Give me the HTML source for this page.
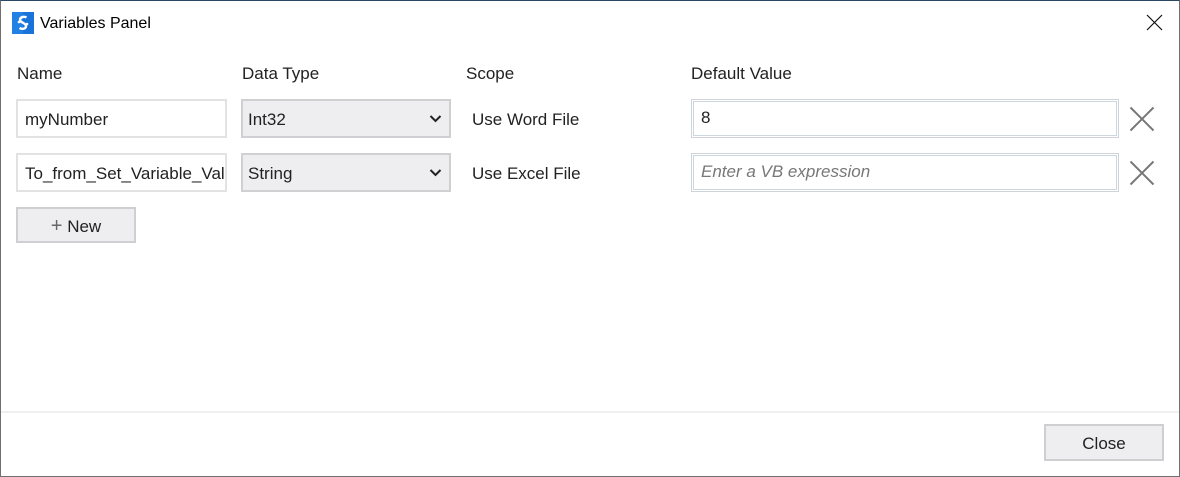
<!DOCTYPE html>
<html><head><style>
body{margin:0;width:1180px;height:477px;overflow:hidden;background:#fff;font-family:"Segoe UI","Liberation Sans",sans-serif;font-size:17px;color:#222;position:relative}
.a{position:absolute}
.win{left:0;top:0;width:1178px;height:475px;border:1px solid #707070;border-top-color:#2b4766;}
.inp{box-sizing:border-box;border:2px solid #e2e2e2;background:#fff;padding-left:7px;line-height:38px;overflow:hidden;white-space:nowrap}
.sel{box-sizing:border-box;border:2px solid #d0d0d4;background:#eeeef0;padding-left:5px;line-height:38px}
.dv{box-sizing:border-box;border:1px solid #d0d4d8;background:#fff;}
.dv div{position:absolute;left:1px;top:1px;right:1px;bottom:1px;border:1px solid #cdd7df;padding-left:7px;line-height:32px}
.btn{box-sizing:border-box;border:2px solid #cfcfd3;background:#eeeef0;text-align:center;line-height:34px}
</style></head><body>
<div class="a win"></div>
<svg class="a" style="left:12px;top:12px" width="22" height="22"><rect width="22" height="22" fill="#1a73d9"/><rect width="11" height="22" fill="#2a8ff0" opacity=".5"/><path d="M14.5 5.5 C12 4 8 5 8 8 C8 10.5 14 11 14 14 C14 17 10 17.5 7.5 16" stroke="#fff" stroke-width="2.4" fill="none"/><circle cx="7" cy="10" r="1.3" fill="#fff"/><circle cx="15" cy="12" r="1.3" fill="#fff"/></svg>
<div class="a" style="left:40px;top:13px;line-height:22px;font-size:16px;color:#000">Variables Panel</div>
<svg class="a" style="left:1146px;top:14px" width="17" height="17"><path d="M1 1L16 16M16 1L1 16" stroke="#111" stroke-width="1.2"/></svg>
<div class="a" style="left:17px;top:63px;line-height:22px">Name</div>
<div class="a" style="left:242px;top:63px;line-height:22px">Data Type</div>
<div class="a" style="left:466px;top:63px;line-height:22px">Scope</div>
<div class="a" style="left:691px;top:63px;line-height:22px">Default Value</div>
<div class="a inp" style="left:16px;top:99px;width:211px;height:39px">myNumber</div>
<div class="a inp" style="left:16px;top:153px;width:211px;height:39px;padding-right:0">To_from_Set_Variable_Value</div>
<div class="a sel" style="left:241px;top:99px;width:210px;height:39px">Int32</div>
<div class="a sel" style="left:241px;top:153px;width:210px;height:39px">String</div>
<svg class="a" style="left:429px;top:114px" width="13" height="9"><path d="M1.5 2L6.5 7L11.5 2" stroke="#222" stroke-width="2" fill="none"/></svg>
<svg class="a" style="left:429px;top:168px" width="13" height="9"><path d="M1.5 2L6.5 7L11.5 2" stroke="#222" stroke-width="2" fill="none"/></svg>
<div class="a" style="left:472px;top:109px;line-height:22px">Use Word File</div>
<div class="a" style="left:472px;top:163px;line-height:22px">Use Excel File</div>
<div class="a dv" style="left:691px;top:99px;width:428px;height:39px"><div>8</div></div>
<div class="a dv" style="left:691px;top:153px;width:428px;height:39px"><div style="font-style:italic;color:#777">Enter a VB expression</div></div>
<svg class="a" style="left:1129px;top:106px" width="26" height="26"><path d="M1.5 1.5L24.5 24.5M24.5 1.5L1.5 24.5" stroke="#777" stroke-width="2"/></svg>
<svg class="a" style="left:1129px;top:160px" width="26" height="26"><path d="M1.5 1.5L24.5 24.5M24.5 1.5L1.5 24.5" stroke="#777" stroke-width="2"/></svg>
<div class="a btn" style="left:16px;top:207px;width:120px;height:36px"><span style="color:#666;font-size:20px">+</span> New</div>
<div class="a" style="left:1px;top:411px;width:1178px;height:2px;background:#efefef"></div>
<div class="a btn" style="left:1044px;top:424px;width:120px;height:37px;line-height:35px">Close</div>
</body></html>
